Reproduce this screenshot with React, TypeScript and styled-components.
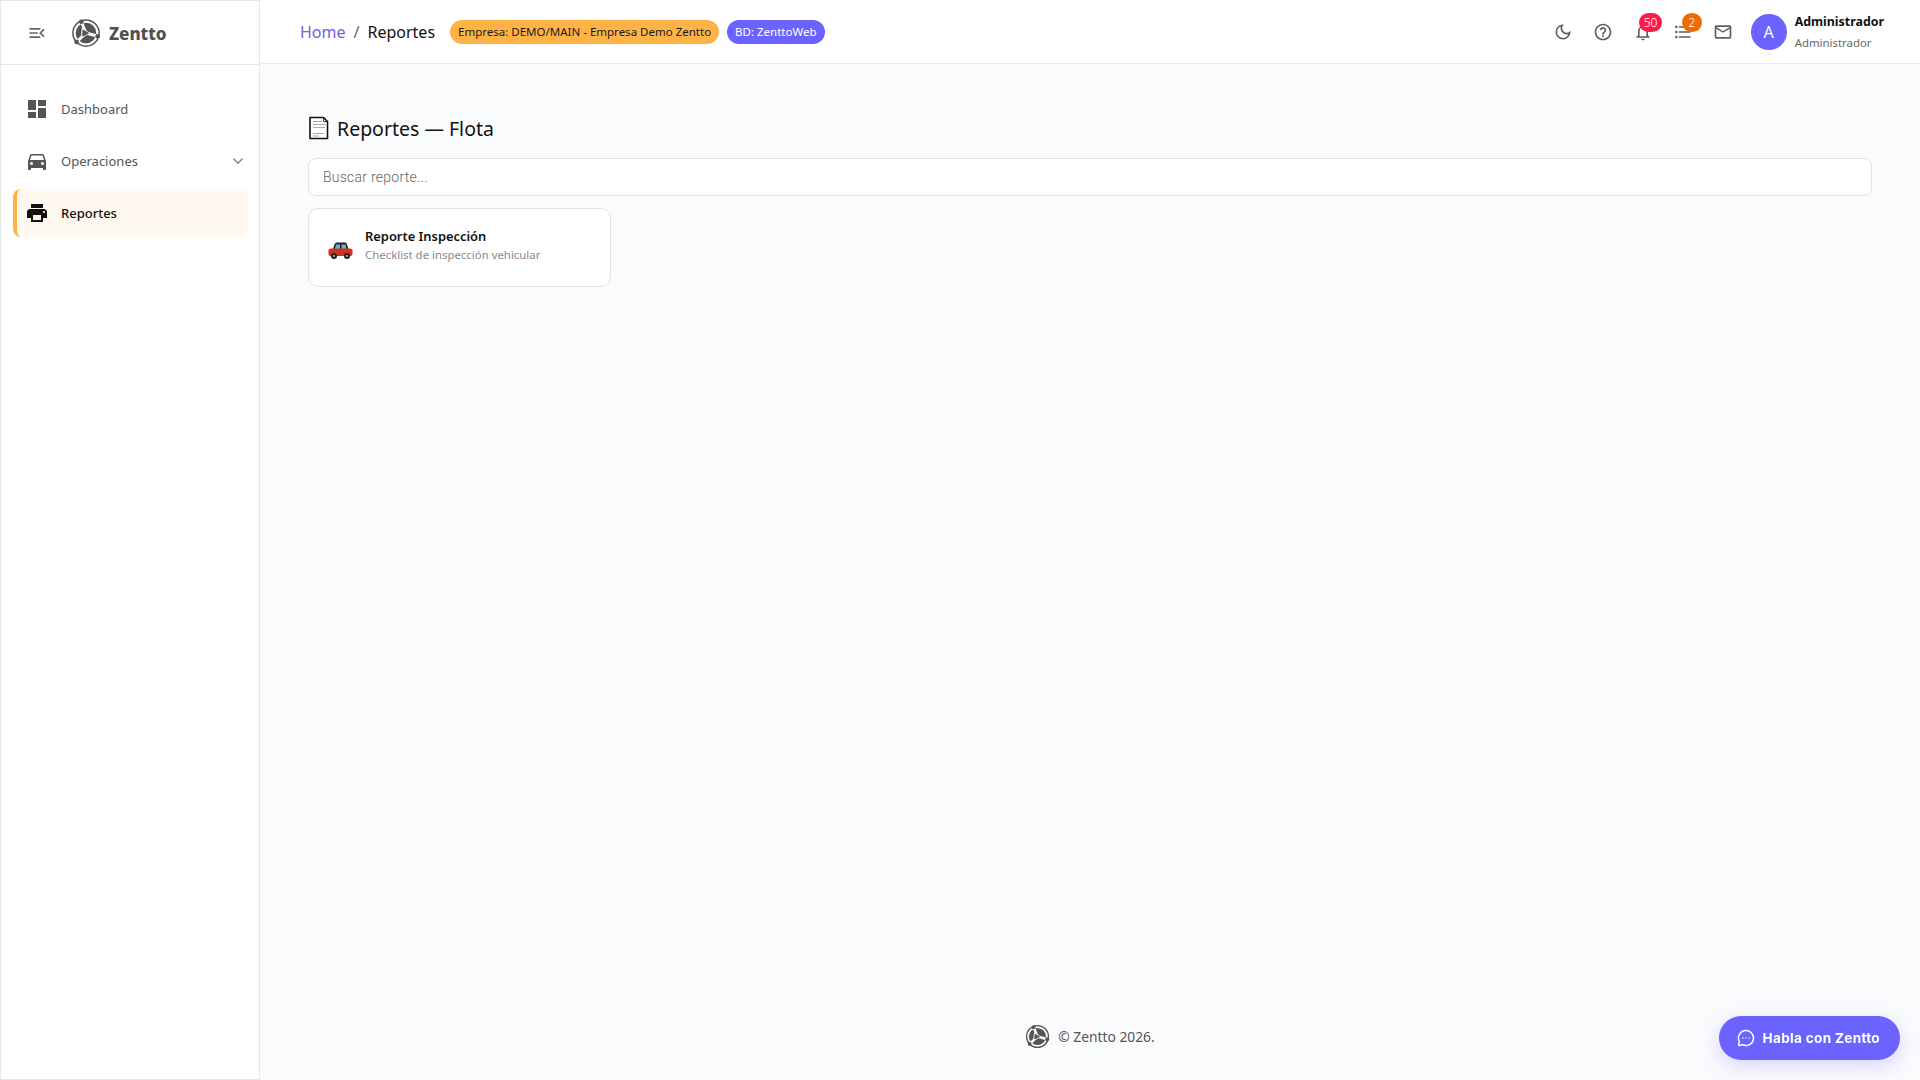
import React from 'react'
import styled, { createGlobalStyle } from 'styled-components'
import {
    MdDashboard,
    MdDirectionsCar,
    MdExpandMore,
    MdFormatListBulleted,
    MdMenuOpen,
    MdNotificationsNone,
    MdOutlineDarkMode,
    MdOutlineHelpOutline,
    MdOutlineMailOutline,
    MdPrint,
} from 'react-icons/md'
import { MessageCircleMore } from 'lucide-react'

const GlobalStyle = createGlobalStyle`
    html, body {
        margin: 0;
        padding: 0;
        background: #fafbfd;
    }

    body {
        font-family: "Noto Sans", "Open Sans", sans-serif;
        color: #111;
    }

    * {
        box-sizing: border-box;
    }
`

const Shell = styled.div`
    display: grid;
    grid-template-columns: 260px 1fr;
    height: 1080px;
    overflow: hidden;
`

const Sidebar = styled.aside`
    display: flex;
    flex-direction: column;
    background: #fff;
    border: 1px solid #e5e7eb;
`

const Brand = styled.div`
    display: flex;
    align-items: center;
    height: 64px;
    padding-left: 26px;
    border-bottom: 1px solid #e5e7eb;
    color: #555;
`

const BrandName = styled.span`
    margin: 2px 0 0 8px;
    font-size: 17px;
    font-weight: 800;
    color: #4f4f4f;
`

const Collapse = styled.span`
    display: flex;
    margin-right: 24px;
    color: #666;
`

const Nav = styled.nav`
    display: flex;
    flex-direction: column;
    gap: 4px;
    padding: 20px 11px 20px 12px;
`

const NavItem = styled.a<{ $active?: boolean }>`
    display: flex;
    align-items: center;
    height: 48px;
    padding-left: ${(p) => (p.$active ? '8px' : '12px')};
    padding-right: 0;
    border-left: ${(p) => (p.$active ? '4px solid #ffb347' : 'none')};
    border-radius: 8px;
    background: ${(p) => (p.$active ? '#fff8ee' : 'transparent')};
    color: ${(p) => (p.$active ? '#111' : '#555')};
    font-size: 13px;
    font-weight: ${(p) => (p.$active ? 500 : 400)};
`

const NavIcon = styled.span<{ $active?: boolean }>`
    display: flex;
    width: 36px;
    color: ${(p) => (p.$active ? '#111' : '#555')};
`

const Chevron = styled.span`
    display: flex;
    margin-left: auto;
    color: #888;
`

const Main = styled.main`
    display: flex;
    flex-direction: column;
    min-width: 0;
`

const Topbar = styled.header`
    display: flex;
    align-items: center;
    height: 64px;
    padding: 0 36px 0 40px;
    background: #fff;
    border-bottom: 1px solid #e9ebef;
`

const Crumbs = styled.div`
    display: flex;
    align-items: center;
    gap: 8px;
    font-size: 16px;
`

const CrumbLink = styled.a`
    color: #6c63d8;
`

const CrumbSep = styled.span`
    color: #666;
`

const Chip = styled.span<{ $tone: 'orange' | 'violet' }>`
    display: inline-flex;
    align-items: center;
    height: 24px;
    padding: 0 8px;
    border-radius: 12px;
    background: ${(p) => (p.$tone === 'orange' ? '#ffb347' : '#6c63ff')};
    color: ${(p) => (p.$tone === 'orange' ? '#1a1a1a' : '#fff')};
    font-size: 11.5px;
    white-space: nowrap;
`

const Chips = styled.div`
    display: flex;
    gap: 8px;
    margin-left: 15px;
`

const Tools = styled.div`
    display: flex;
    align-items: center;
    gap: 20px;
    margin-left: auto;
`

const Tool = styled.span`
    position: relative;
    display: flex;
    color: #5f5f5f;
`

const Badge = styled.span<{ $tone: 'red' | 'amber' }>`
    position: absolute;
    top: -9px;
    left: ${(p) => (p.$tone === 'red' ? '6px' : '9px')};
    min-width: 20px;
    height: 19px;
    padding: 0 5px;
    border-radius: 10px;
    background: ${(p) => (p.$tone === 'red' ? '#ff1a4b' : '#ef6c00')};
    color: #fff;
    font-size: 12px;
    font-weight: 300;
    line-height: 19px;
    text-align: center;
`

const User = styled.div`
    display: flex;
    align-items: center;
    gap: 8px;
    margin-left: -2px;
`

const Avatar = styled.span`
    display: flex;
    align-items: center;
    justify-content: center;
    width: 36px;
    height: 36px;
    border-radius: 50%;
    background: #6c63ff;
    color: #fff;
    font-size: 16px;
`

const UserText = styled.div`
    display: flex;
    flex-direction: column;
    gap: 4px;
`

const UserName = styled.span`
    font-size: 12.4px;
    font-weight: 700;
    line-height: 18px;
`

const UserRole = styled.span`
    font-size: 11.4px;
    line-height: 16px;
    color: #666;
`

const Content = styled.section`
    flex: 1;
    padding: 49px 48px 0 48px;
`

const Title = styled.h1`
    display: flex;
    align-items: center;
    gap: 8px;
    height: 30px;
    margin: 0 0 15px;
    font-size: 19.5px;
    font-weight: 400;
`

const SearchBox = styled.input`
    display: block;
    width: 100%;
    height: 38px;
    padding: 0 14px;
    border: 1px solid #dfe2e6;
    border-radius: 8px;
    background: #fff;
    font-family: Roboto, sans-serif;
    font-size: 14px;
    font-weight: 300;
    letter-spacing: 0.25px;
    outline: none;

    &::placeholder {
        color: #666;
        opacity: 1;
    }
`

const Card = styled.article`
    display: flex;
    align-items: center;
    gap: 11px;
    width: 303px;
    height: 79px;
    margin-top: 12px;
    padding: 0 18px;
    border: 1px solid #e0e3e7;
    border-radius: 10px;
    background: #fff;
`

const CardBody = styled.div`
    margin-bottom: 6px;
`

const CardTitle = styled.div`
    margin-bottom: 1px;
    font-size: 12.9px;
    font-weight: 600;
    line-height: 20px;
`

const CardText = styled.div`
    font-size: 11.4px;
    line-height: 16px;
    color: #8a8a8a;
`

const CarSlot = styled.span`
    display: flex;
    margin-top: 6px;
`

const Footer = styled.footer`
    display: flex;
    align-items: center;
    justify-content: center;
    gap: 8px;
    height: 88px;
    color: #555;
    font-size: 13.8px;
`

const ChatButton = styled.button`
    position: fixed;
    right: 20px;
    bottom: 20px;
    display: flex;
    align-items: center;
    gap: 8px;
    height: 44px;
    padding: 0 20px 0 18px;
    border: none;
    border-radius: 22px;
    background: #6c63ff;
    box-shadow: 0 6px 20px rgba(108, 99, 255, 0.25);
    color: #fff;
    font-family: Inter, sans-serif;
    font-size: 13.6px;
    font-weight: 700;
    letter-spacing: 0.3px;
`

function ZenttoLogo({ size }: { size: number }): React.JSX.Element {
    return (
        <svg width={size} height={size} viewBox="0 0 32 32">
            <circle cx="16" cy="16" r="14" fill="none" stroke="#555" strokeWidth="1.6" />
            <circle cx="16" cy="16" r="11" fill="#555" />
            <path d="M16 16 L11 4 M16 16 L28.500 19.500 M16 16 L6 25.500" stroke="#fff" strokeWidth="3.200" />
            <path d="M11.500 10.500 L21 16.500 L10.500 21 Z" fill="#fff" />
            <path d="M13 13 L18.500 16.300 L12.500 19 Z" fill="#555" stroke="#555" strokeWidth="1.200" strokeLinejoin="round" />
            <circle cx="11" cy="4" r="2.500" fill="#555" />
            <circle cx="28.500" cy="19.500" r="2.500" fill="#555" />
            <circle cx="6" cy="25.500" r="2.500" fill="#555" />
        </svg>
    )
}

function PageIcon(): React.JSX.Element {
    return (
        <svg width="21" height="24" viewBox="0 0 21 24">
            <path d="M2 1.500h13.500l4 4v17h-17.500z" fill="#fff" stroke="#111" strokeWidth="1.600" />
            <path d="M15.500 1.500v4h4" fill="none" stroke="#111" strokeWidth="0.800" />
            <path d="M5 5.500h9M5 8.500h12M5 11.500h12M5 17.500h11M5 20h6" stroke="#aaa" strokeWidth="1.200" />
        </svg>
    )
}

function CarIcon(): React.JSX.Element {
    return (
        <svg width="27" height="20" viewBox="0 0 26 20">
            <path d="M7 3.500 C7.500 2 8.500 1.500 10 1.500 H17 C18.500 1.500 19 2 19.500 3.500 L21 8 H5.500 Z" fill="#222" />
            <path d="M8.500 3.500 H12.500 V8 H7.500 Z M14 3.500 H18 L19 8 H14 Z" fill="#5fb4d8" />
            <path d="M1 9.500 C1 8 2.500 7.500 5 7.500 H21 C23.500 7.500 25 8 25 9.500 V13 C25 14.500 24 15 22 15 H4 C2 15 1 14.500 1 13 Z" fill="#d0301f" />
            <circle cx="6.500" cy="15" r="3" fill="#222" />
            <circle cx="19.500" cy="15" r="3" fill="#222" />
            <circle cx="6.500" cy="15" r="1" fill="#bbb" />
            <circle cx="19.500" cy="15" r="1" fill="#bbb" />
        </svg>
    )
}

export default function App(): React.JSX.Element {
    return (
        <Shell>
            <GlobalStyle />
            <Sidebar>
                <Brand>
                    <Collapse>
                        <MdMenuOpen size={20} />
                    </Collapse>
                    <ZenttoLogo size={30} />
                    <BrandName>Zentto</BrandName>
                </Brand>
                <Nav>
                    <NavItem>
                        <NavIcon>
                            <MdDashboard size={24} />
                        </NavIcon>
                        Dashboard
                    </NavItem>
                    <NavItem>
                        <NavIcon>
                            <MdDirectionsCar size={24} />
                        </NavIcon>
                        Operaciones
                        <Chevron>
                            <MdExpandMore size={20} />
                        </Chevron>
                    </NavItem>
                    <NavItem $active>
                        <NavIcon $active>
                            <MdPrint size={24} />
                        </NavIcon>
                        Reportes
                    </NavItem>
                </Nav>
            </Sidebar>
            <Main>
                <Topbar>
                    <Crumbs>
                        <CrumbLink>Home</CrumbLink>
                        <CrumbSep>/</CrumbSep>
                        <span>Reportes</span>
                    </Crumbs>
                    <Chips>
                        <Chip $tone="orange">Empresa: DEMO/MAIN - Empresa Demo Zentto</Chip>
                        <Chip $tone="violet">BD: ZenttoWeb</Chip>
                    </Chips>
                    <Tools>
                        <Tool>
                            <MdOutlineDarkMode size={20} />
                        </Tool>
                        <Tool>
                            <MdOutlineHelpOutline size={20} />
                        </Tool>
                        <Tool>
                            <MdNotificationsNone size={20} />
                            <Badge $tone="red">50</Badge>
                        </Tool>
                        <Tool>
                            <MdFormatListBulleted size={20} />
                            <Badge $tone="amber">2</Badge>
                        </Tool>
                        <Tool>
                            <MdOutlineMailOutline size={20} />
                        </Tool>
                        <User>
                            <Avatar>A</Avatar>
                            <UserText>
                                <UserName>Administrador</UserName>
                                <UserRole>Administrador</UserRole>
                            </UserText>
                        </User>
                    </Tools>
                </Topbar>
                <Content>
                    <Title>
                        <PageIcon />
                        Reportes — Flota
                    </Title>
                    <SearchBox placeholder="Buscar reporte..." />
                    <Card>
                        <CarSlot>
                            <CarIcon />
                        </CarSlot>
                        <CardBody>
                            <CardTitle>Reporte Inspección</CardTitle>
                            <CardText>Checklist de inspección vehicular</CardText>
                        </CardBody>
                    </Card>
                </Content>
                <Footer>
                    <ZenttoLogo size={25} />
                    © Zentto 2026.
                </Footer>
            </Main>
            <ChatButton>
                <MessageCircleMore size={18} />
                Habla con Zentto
            </ChatButton>
        </Shell>
    )
}
